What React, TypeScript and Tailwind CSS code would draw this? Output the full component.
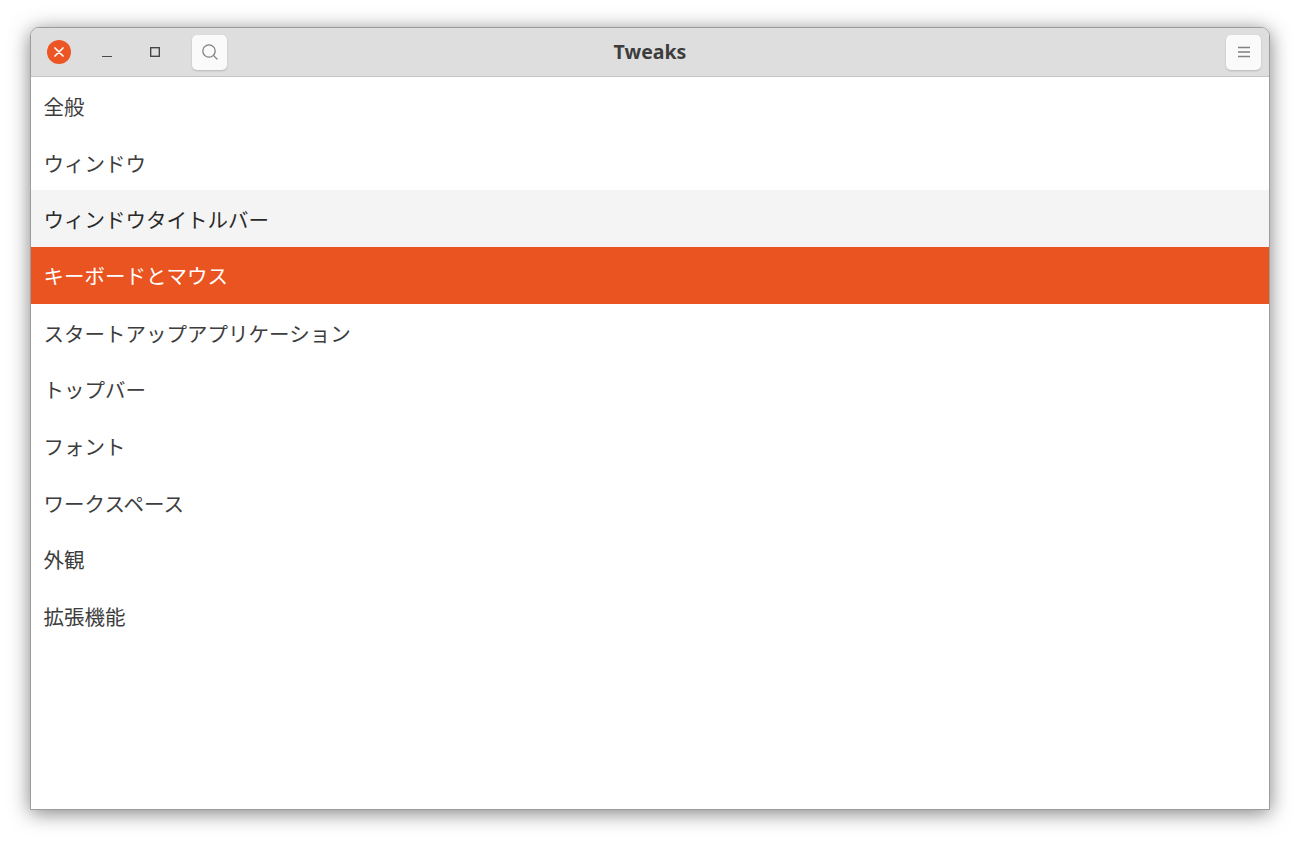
const items = [
  '全般',
  'ウィンドウ',
  'ウィンドウタイトルバー',
  'キーボードとマウス',
  'スタートアップアプリケーション',
  'トップバー',
  'フォント',
  'ワークスペース',
  '外観',
  '拡張機能',
];

function HeaderButton({ children }: { children: React.ReactNode }) {
  return (
    <button
      type="button"
      className="flex h-[35px] w-[35px] items-center justify-center rounded-[5px] bg-[#fafafa] shadow-[0_1px_2px_rgba(0,0,0,0.18)]"
    >
      {children}
    </button>
  );
}

export default function App() {
  return (
    <div className="flex h-[844px] w-[1300px] overflow-hidden bg-white px-[30px] pb-[34px] pt-[27px] font-['Noto_Sans_CJK_JP','Noto_Sans',sans-serif]">
      <div className="flex w-full flex-col overflow-hidden rounded-t-[9px] border border-[#9c9c9c] bg-white shadow-[0_3px_20px_rgba(0,0,0,0.5)]">
        <header className="relative flex h-[49px] shrink-0 items-center border-b border-[#c4c4c4] bg-[#dedede] pl-[16px] pr-[8px]">
          <button type="button" className="flex h-[24px] w-[24px] items-center justify-center rounded-full bg-[#ec5625]">
            <svg width="10" height="10" viewBox="0 0 10 10" fill="none" stroke="#fff" strokeWidth="1.7" strokeLinecap="round">
              <path d="M1 1l8 8M9 1l-8 8" />
            </svg>
          </button>
          <button type="button" className="ml-[30px] flex h-[24px] w-[12px] items-center justify-center">
            <svg width="10" height="12" viewBox="0 0 10 12" fill="none" stroke="#4a4a4a" strokeWidth="1.2">
              <path d="M0 10.5h10" />
            </svg>
          </button>
          <button type="button" className="ml-[36px] flex h-[24px] w-[12px] items-center justify-center">
            <svg width="10" height="10" viewBox="0 0 10 10" fill="none" stroke="#3d3d3d" strokeWidth="1.3">
              <rect x="0.7" y="0.7" width="8.6" height="8.6" />
            </svg>
          </button>
          <div className="ml-[31px]">
            <HeaderButton>
              <svg width="18" height="18" viewBox="0 0 18 18" fill="none" stroke="#808080" strokeWidth="1.3" strokeLinecap="round">
                <circle cx="8" cy="8" r="6.2" />
                <path d="M12.6 12.6L16 16" />
              </svg>
            </HeaderButton>
          </div>
          <h1 className="pointer-events-none absolute inset-x-0 text-center font-['Noto_Sans',sans-serif] text-[19.5px] font-bold text-[#3d3d3d]">
            Tweaks
          </h1>
          <div className="ml-auto">
            <HeaderButton>
              <svg width="14" height="12" viewBox="0 0 14 12" fill="none" stroke="#808080" strokeWidth="1.3">
                <path d="M1 1.5h12M1 6h12M1 10.5h12" />
              </svg>
            </HeaderButton>
          </div>
        </header>
        <ul className="flex-1 text-[20.5px] text-[#3d3d3d]">
          {items.map((item, i) => (
            <li
              key={item}
              className={
                i === 3
                  ? 'flex h-[56.6px] items-center bg-[#e95420] pl-[12.6px] text-white'
                  : i === 2
                    ? 'flex h-[56.7px] items-center bg-[#f4f4f4] pl-[12.6px] pt-[2px] text-[#2a2a2a]'
                    : 'flex h-[56.7px] items-center pl-[12.6px] pt-[2px]'
              }
            >
              {item}
            </li>
          ))}
        </ul>
      </div>
    </div>
  );
}
